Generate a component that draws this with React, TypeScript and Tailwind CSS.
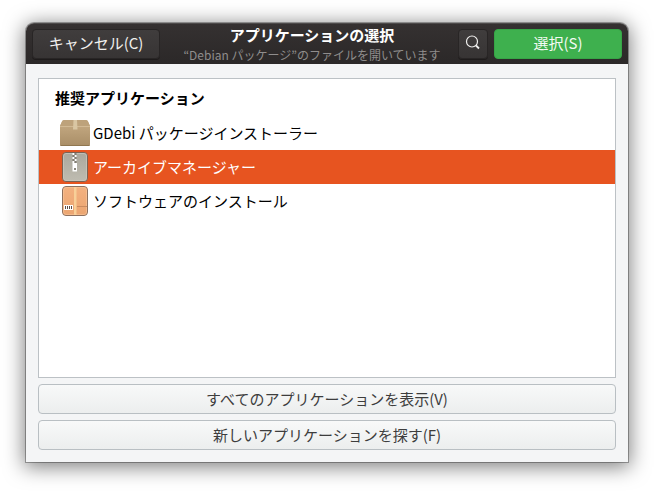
import type { ReactNode } from 'react';
import { useState } from 'react';
import clsx from 'clsx';

function PackageIcon() {
  return (
    <svg className="h-8 w-8" viewBox="0 0 32 32" aria-hidden="true">
      <defs>
        <linearGradient id="pkg-front" x1="0" y1="0" x2="0" y2="1">
          <stop offset="0" stopColor="#c8ad86" />
          <stop offset="1" stopColor="#a98e67" />
        </linearGradient>
      </defs>
      <path d="M5 3h22q1.500 0 2 1.500L31 9v18.500q0 1.500-1.500 1.500h-27Q1 29 1 27.500V9l2-4.500Q3.500 3 5 3z" fill="url(#pkg-front)" />
      <path d="M5 3h22q1.500 0 2 1.500L31 9H1l2-4.500Q3.500 3 5 3z" fill="#bda27b" />
      <path d="M1 9.500h30" stroke="#d2ba95" strokeWidth="1" />
      <path d="M14.500 3h3.500l.5 9.500h-4.500z" fill="#d9c6a3" />
      <path d="M1.500 28.500h29" stroke="#907750" strokeWidth="1" />
    </svg>
  );
}

function ArchiveIcon() {
  return (
    <svg className="h-8 w-8" viewBox="0 0 32 32" aria-hidden="true">
      <defs>
        <linearGradient id="arc-body" x1="0" y1="0" x2="0" y2="1">
          <stop offset="0" stopColor="#aaa79c" />
          <stop offset="1" stopColor="#bfbcb1" />
        </linearGradient>
      </defs>
      <rect x="3.500" y="1.500" width="25" height="29" rx="3.500" fill="url(#arc-body)" stroke="#7a6254" />
      <rect x="4.500" y="2.500" width="23" height="27" rx="2.500" fill="none" stroke="#cbc8bd" strokeOpacity=".7" />
      <path d="M13.500 2h2v2h-2zM15.500 4h2v2h-2zM13.500 6h2v2h-2zM15.500 8h2v2h-2zM13.500 10h2v2h-2z" fill="#fff" />
      <path d="M15.500 2h2v2h-2zM13.500 4h2v2h-2zM15.500 6h2v2h-2zM13.500 8h2v2h-2zM15.500 10h2v2h-2z" fill="#817d73" />
      <path d="M13.500 12h4.500v8.500h-4.500z" fill="#fff" />
      <path d="M15 17h2v2h-2z" fill="#8b877d" />
    </svg>
  );
}

function SoftwareIcon() {
  return (
    <svg className="h-8 w-8" viewBox="0 0 32 32" aria-hidden="true">
      <defs>
        <linearGradient id="sw-body" x1="0" y1="0" x2="0" y2="1">
          <stop offset="0" stopColor="#f3b180" />
          <stop offset="1" stopColor="#eba571" />
        </linearGradient>
      </defs>
      <rect x="3.500" y="1.500" width="25" height="29" rx="3.500" fill="url(#sw-body)" stroke="#8d705e" />
      <rect x="4.500" y="2.500" width="23" height="27" rx="2.500" fill="none" stroke="#f8c79d" strokeOpacity=".6" />
      <path d="M15 2h2.500v28H15z" fill="#f8cf98" />
      <path d="M18 21.500h10" stroke="#c98b60" strokeWidth="1" />
      <path d="M5 20h9v5H5z" fill="#fff" />
      <path d="M6.500 21v3M8.500 21v3M10.500 21v3M12.500 21v3" stroke="#5d4d46" strokeWidth="1" />
    </svg>
  );
}

function SearchGlyph() {
  return (
    <svg className="size-4" viewBox="0 0 16 16" fill="none" stroke="currentColor" aria-hidden="true">
      <circle cx="7" cy="6.500" r="5.500" strokeWidth="1.200" />
      <path d="M11 10.500l3 3" strokeWidth="1.800" />
    </svg>
  );
}

const apps: { id: string; name: string; icon: ReactNode }[] = [
  { id: 'gdebi', name: 'GDebi パッケージインストーラー', icon: <PackageIcon /> },
  { id: 'archive', name: 'アーカイブマネージャー', icon: <ArchiveIcon /> },
  { id: 'software', name: 'ソフトウェアのインストール', icon: <SoftwareIcon /> },
];

const darkButton =
  'flex h-[30px] items-center justify-center rounded border border-[#282525] bg-linear-to-b from-[#403d3d] to-[#373434] pb-0.5 text-[#f0efee] shadow-[0_1px_0_#1e1b1b]';

const lightButton =
  'h-[30px] w-full rounded border border-[#b9bfc3] bg-linear-to-b from-[#f8f9f9] to-[#eceeee] pb-px text-[#3d3d3d]';

export default function App() {
  const [selected, setSelected] = useState('archive');

  return (
    <div className="flex min-h-screen flex-col bg-white px-[26px] pt-[23px] pb-[29px] font-['Noto_Sans_CJK_JP',sans-serif] text-[15px] leading-5">
      <main className="flex grow flex-col rounded-t-lg bg-[#f4f5f6] shadow-[0_0_0_1px_rgba(0,0,0,0.3),0_3px_20px_2px_rgba(0,0,0,0.5)]">
        <header className="flex items-center gap-1.5 rounded-t-lg border-t border-[#4d4a4a] bg-linear-to-b from-[#353131] to-[#2b2828] px-1.5 text-white">
          <button type="button" className={clsx(darkButton, 'w-32')}>
            キャンセル(C)
          </button>
          <div className="h-10 grow pl-1.5 text-center">
            <h1 className="pt-px font-bold">アプリケーションの選択</h1>
            <p className="text-xs leading-5 text-[#8f8d8c]">“Debian パッケージ”のファイルを開いています</p>
          </div>
          <button type="button" aria-label="検索" className={clsx(darkButton, 'w-[30px]')}>
            <SearchGlyph />
          </button>
          <button
            type="button"
            className="h-[30px] w-32 rounded border border-[#36a546] bg-[#3eb04e] pb-0.5 text-[#f3fbf4]"
          >
            選択(S)
          </button>
        </header>

        <div className="flex grow flex-col gap-1.5 px-3 pt-3.5 pb-3">
          <section className="grow border border-[#bcc1c5] bg-white">
            <h2 className="px-4 pt-[9px] pb-2 font-bold text-black">推奨アプリケーション</h2>
            <ul>
              {apps.map((app) => (
                <li key={app.id}>
                  <button
                    type="button"
                    aria-pressed={selected === app.id}
                    onClick={() => setSelected(app.id)}
                    className={clsx(
                      'flex h-[34px] w-full items-center gap-0.5 pl-5 text-left',
                      selected === app.id ? 'bg-[#e75420] text-white' : 'text-black',
                    )}
                  >
                    {app.icon}
                    {app.name}
                  </button>
                </li>
              ))}
            </ul>
          </section>
          <button type="button" className={lightButton}>
            すべてのアプリケーションを表示(V)
          </button>
          <button type="button" className={lightButton}>
            新しいアプリケーションを探す(F)
          </button>
        </div>
      </main>
    </div>
  );
}
